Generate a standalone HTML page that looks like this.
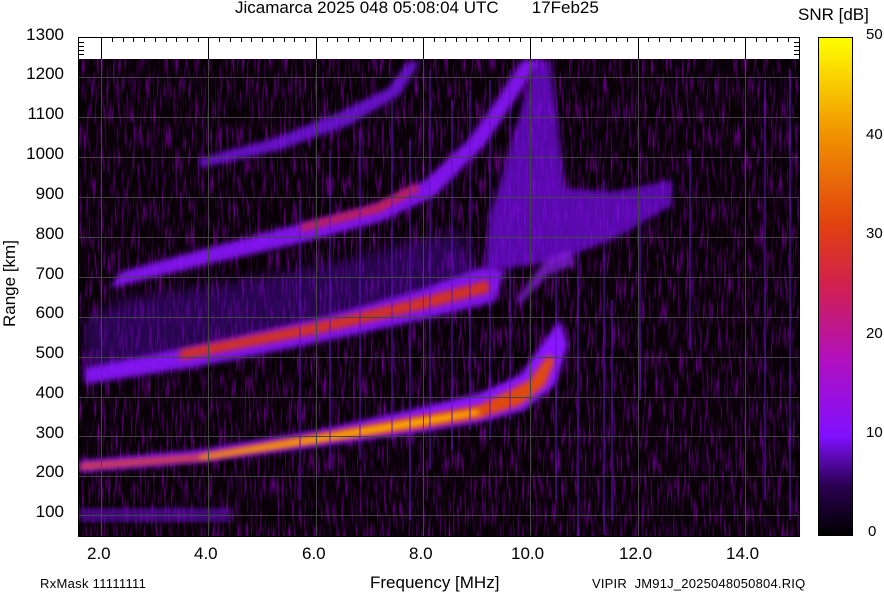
<!DOCTYPE html>
<html><head><meta charset="utf-8"><style>
html,body{margin:0;padding:0;background:#fff;}
body{width:884px;height:595px;overflow:hidden;position:relative;font-family:"Liberation Sans",sans-serif;color:#000;}
.t{position:absolute;white-space:nowrap;}
.yl{position:absolute;font-size:17px;right:820px;}
.xl{position:absolute;font-size:17px;top:544px;}
.cl{position:absolute;font-size:15px;left:866px;}
</style></head><body>
<div class="t" style="left:235px;top:-2px;font-size:17px;">Jicamarca 2025 048 05:08:04 UTC &nbsp; &nbsp; &nbsp; 17Feb25</div>
<div class="t" style="left:798px;top:5px;font-size:17px;">SNR [dB]</div>
<svg width="884" height="595" style="position:absolute;left:0;top:0">
<defs>
<linearGradient id="cb" x1="0" y1="1" x2="0" y2="0">
<stop offset="0" stop-color="#000"/><stop offset="0.1" stop-color="#2a0050"/><stop offset="0.2" stop-color="#8010ff"/><stop offset="0.35" stop-color="#b010c0"/><stop offset="0.5" stop-color="#d02050"/><stop offset="0.62" stop-color="#e04010"/><stop offset="0.8" stop-color="#f09000"/><stop offset="1" stop-color="#ffff00"/>
</linearGradient>
<filter id="b3"><feGaussianBlur stdDeviation="3"/></filter>
<filter id="b6"><feGaussianBlur stdDeviation="6"/></filter>
<filter id="nz" x="0" y="0" width="1" height="1"><feTurbulence type="fractalNoise" baseFrequency="0.45 0.04" numOctaves="2" seed="3"/><feColorMatrix values="0 0 0 0 0.25  0 0 0 0 0  0 0 0 0 0.45  0 0 0 2 -0.95"/></filter>
<clipPath id="pc"><rect x="79" y="59" width="720" height="477"/></clipPath>
</defs>
<rect x="79" y="59" width="720" height="477" fill="#080006"/>
<g clip-path="url(#pc)">
<rect x="79" y="59" width="720" height="477" filter="url(#nz)"/>
<path d="M85 380 L200 360 L330 335 L450 305 L480 280 L460 230 L350 260 L220 285 L120 300 L85 320Z" fill="#5a10c0" opacity="0.4" filter="url(#b6)"/>
<rect x="80" y="508" width="150" height="14" fill="#6a10d0" opacity="0.6" filter="url(#b3)"/>
<path d="M485 272 L560 260 L620 236 L672 205 L672 180 L610 192 L565 188 L550 60 L535 60 L510 150 L490 215Z" fill="#7a10f0" opacity="0.7" filter="url(#b3)"/>
<path d="M200 168 L280 150 L350 125 L400 95 L420 62 L408 62 L388 88 L340 112 L275 138 L200 158Z" fill="#8018ff" opacity="0.75" filter="url(#b3)"/>
<path d="M110 288 L200 266 L300 243 L380 222 L435 196 L485 145 L515 100 L540 60 L522 60 L498 98 L468 140 L425 180 L375 205 L295 225 L200 250 L120 272Z" fill="#8a18ff" opacity="0.9" filter="url(#b3)"/>
<path d="M300 232 L380 212 L420 190 L415 184 L375 205 L300 225Z" fill="#c02050" filter="url(#b3)"/>
<path d="M85 384 L200 366 L320 342 L420 320 L495 302 L505 270 L480 268 L420 290 L320 318 L200 345 L85 368Z" fill="#8a18ff" opacity="0.9" filter="url(#b3)"/>
<path d="M180 360 L320 333 L420 310 L490 292 L488 280 L420 298 L320 322 L180 350Z" fill="#d03020" filter="url(#b3)"/>
<path d="M515 300 L545 260 L570 250 L575 265 L548 275 L520 305Z" fill="#9020f0" opacity="0.7" filter="url(#b3)"/>
<path d="M80 472 L200 462 L320 446 L420 432 L480 422 L525 410 L555 385 L568 345 L560 320 L545 340 L520 375 L480 393 L420 408 L320 430 L200 450 L80 461Z" fill="#8a18ff" filter="url(#b3)"/>
<path d="M80 469 L200 460 L320 442 L420 428 L480 418 L520 405 L545 385 L555 360 L548 355 L530 380 L480 405 L420 416 L320 434 L200 455 L80 464Z" fill="#e04810" filter="url(#b3)"/>
<path d="M200 459 L320 441 L420 425 L480 414 L478 410 L420 419 L320 436 L200 456Z" fill="#ffc000" filter="url(#b3)"/>
<g stroke="#6010c0" stroke-width="2" opacity="0.5">
<path d="M300 200 V500 M330 150 V470 M360 130 V460 M392 100 V440 M410 140 V520 M430 70 V470 M452 100 V450 M470 90 V430 M490 80 V440 M510 70 V420 M556 200 V500 M578 230 V540 M604 180 V535 M612 300 V520 M640 200 V400 M690 150 V350 M765 80 V500 M790 70 V520"/>
</g>
</g>
<g stroke="#444" stroke-width="1">
<path d="M79 77.5H799 M79 117.5H799 M79 157.5H799 M79 197.5H799 M79 237.5H799 M79 277.5H799 M79 317.5H799 M79 357.5H799 M79 397.5H799 M79 436.5H799 M79 476.5H799 M79 515.5H799"/>
<path d="M101.5 59V536 M208.5 59V536 M316.5 59V536 M423.5 59V536 M530.5 59V536 M638.5 59V536 M745.5 59V536"/>
</g>
<g stroke="#000" stroke-width="1">
<path d="M101.5 38V59 M208.5 38V59 M316.5 38V59 M423.5 38V59 M530.5 38V59 M638.5 38V59 M745.5 38V59"/>
<path d="M112.5 38v4M123.5 38v4M133.5 38v4M144.5 38v4M155.5 38v4M166.5 38v4M176.5 38v4M187.5 38v4M198.5 38v4M219.5 38v4M230.5 38v4M241.5 38v4M251.5 38v4M262.5 38v4M273.5 38v4M284.5 38v4M294.5 38v4M305.5 38v4M327.5 38v4M337.5 38v4M348.5 38v4M359.5 38v4M370.5 38v4M380.5 38v4M391.5 38v4M402.5 38v4M413.5 38v4M434.5 38v4M445.5 38v4M456.5 38v4M466.5 38v4M477.5 38v4M488.5 38v4M498.5 38v4M509.5 38v4M520.5 38v4M541.5 38v4M552.5 38v4M563.5 38v4M573.5 38v4M584.5 38v4M595.5 38v4M606.5 38v4M616.5 38v4M627.5 38v4M648.5 38v4M659.5 38v4M670.5 38v4M681.5 38v4M691.5 38v4M702.5 38v4M713.5 38v4M724.5 38v4M734.5 38v4M756.5 38v4M766.5 38v4M777.5 38v4M788.5 38v4"/>
<path d="M79 42.5h5M79 46.5h5M79 50.5h5M79 54.5h5 M799 42.5h-5M799 46.5h-5M799 50.5h-5M799 54.5h-5"/>
</g>
<rect x="78.5" y="37.5" width="721" height="499" fill="none" stroke="#000"/>
<rect x="818.5" y="37.5" width="34" height="498" fill="url(#cb)" stroke="#000"/>
</svg>
<div class="yl" style="top:25px">1300</div>
<div class="yl" style="top:64px">1200</div>
<div class="yl" style="top:104px">1100</div>
<div class="yl" style="top:144px">1000</div>
<div class="yl" style="top:184px">900</div>
<div class="yl" style="top:224px">800</div>
<div class="yl" style="top:264px">700</div>
<div class="yl" style="top:303px">600</div>
<div class="yl" style="top:343px">500</div>
<div class="yl" style="top:383px">400</div>
<div class="yl" style="top:423px">300</div>
<div class="yl" style="top:462px">200</div>
<div class="yl" style="top:502px">100</div>
<div class="xl" style="left:87px">2.0</div>
<div class="xl" style="left:194px">4.0</div>
<div class="xl" style="left:302px">6.0</div>
<div class="xl" style="left:409px">8.0</div>
<div class="xl" style="left:511px">10.0</div>
<div class="xl" style="left:619px">12.0</div>
<div class="xl" style="left:726px">14.0</div>
<div class="cl" style="top:26px">50</div>
<div class="cl" style="top:126px">40</div>
<div class="cl" style="top:225px">30</div>
<div class="cl" style="top:325px">20</div>
<div class="cl" style="top:424px">10</div>
<div class="cl" style="top:523px;left:868px">0</div>
<div class="t" style="top:287px;font-size:17px;transform:rotate(-90deg);transform-origin:center;width:60px;left:-20px">Range [km]</div>
<div class="t" style="left:370px;top:573px;font-size:17px;">Frequency [MHz]</div>
<div class="t" style="left:40px;top:576px;font-size:13px;letter-spacing:0.3px">RxMask 11111111</div>
<div class="t" style="left:592px;top:576px;font-size:13px;letter-spacing:0.2px">VIPIR &nbsp;JM91J_2025048050804.RIQ</div>
</body></html>
